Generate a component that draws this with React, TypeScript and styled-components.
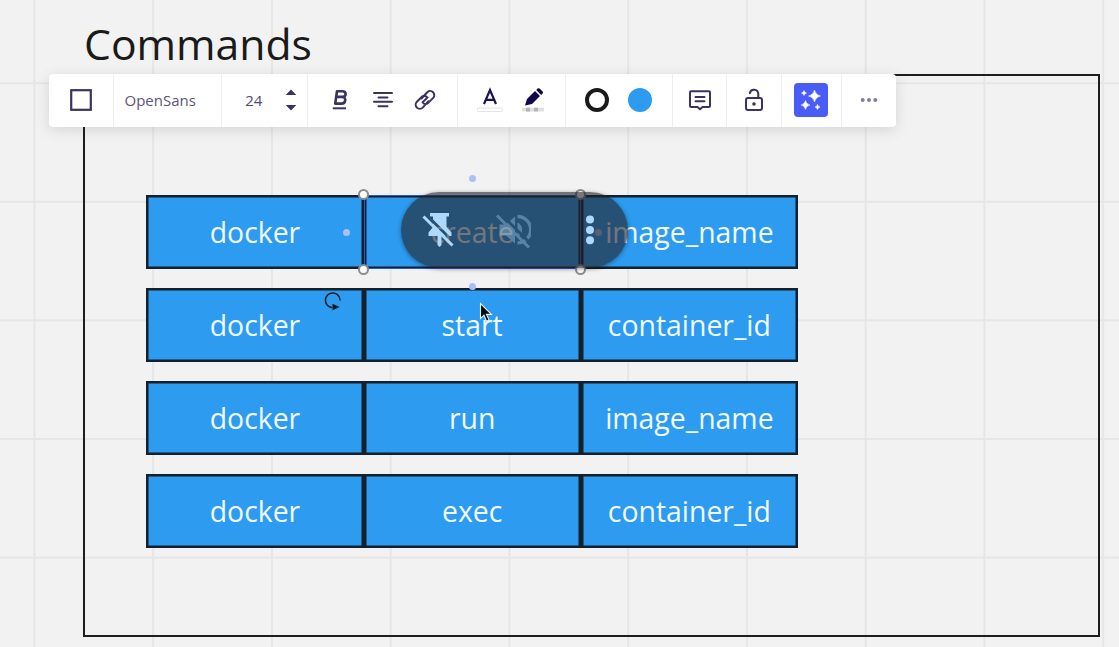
import React from "react";
import styled, { createGlobalStyle } from "styled-components";

const INK = "#3b3163";

const GlobalStyle = createGlobalStyle`
  *, *::before, *::after { box-sizing: border-box; }
  html, body { margin: 0; padding: 0; overflow: hidden; }
  body { font-family: "Open Sans", "Noto Sans", sans-serif; }
  svg { display: block; flex: none; overflow: visible; }
`;

const Board = styled.main`
  position: relative;
  width: 1119px;
  height: 647px;
  overflow: hidden;
  background-color: #f2f2f2;
  background-image:
    linear-gradient(to right, #e6e6e7 1.6px, transparent 1.6px),
    linear-gradient(to bottom, #e6e6e7 1.6px, transparent 1.6px);
  background-size: 118.75px 118.6px;
  background-position: 33.4px 82.2px;
`;

const Title = styled.h1`
  position: absolute;
  left: 84px;
  top: 14px;
  margin: 0;
  font-size: 42.7px;
  line-height: 60px;
  font-weight: 400;
  color: #1a1a1a;
  white-space: nowrap;
`;

const Frame = styled.section`
  position: absolute;
  left: 83.4px;
  top: 74px;
  z-index: 0;
  width: 1016.6px;
  height: 563px;
  padding: 118.6px 0 0 61px;
  border: 2px solid #1d1e1e;
`;

const Rows = styled.div`
  display: flex;
  flex-direction: column;
  gap: 19.2px;
`;

const Row = styled.div`
  display: grid;
  grid-template-columns: repeat(3, 217.2px);
  height: 74px;
`;

const Cell = styled.div<{ $selected?: boolean }>`
  position: relative;
  display: flex;
  align-items: center;
  justify-content: center;
  padding-top: 0.6px;
  background: #2d9bf0;
  border: 2px solid #14202b;
  box-shadow: inset 0 0 0 0.5px #14202b;
  color: #f1f9ff;
  font-size: 28.4px;
  line-height: 38px;
  outline: ${(p) => (p.$selected ? "1px solid #2f57d9" : "none")};
  outline-offset: -1px;
  z-index: ${(p) => (p.$selected ? 1 : 0)};
`;

const Handle = styled.i<{ $x: number; $y: number }>`
  position: absolute;
  left: ${(p) => p.$x - 5.5}px;
  top: ${(p) => p.$y - 5.5}px;
  width: 11px;
  height: 11px;
  border-radius: 50%;
  background: #fff;
  border: 2px solid #8c8c8c;
`;

const Anchor = styled.i<{ $x: number; $y: number }>`
  position: absolute;
  left: ${(p) => p.$x - 3.5}px;
  top: ${(p) => p.$y - 3.5}px;
  width: 7px;
  height: 7px;
  border-radius: 50%;
  background: #a9c1f3;
`;

const Toolbar = styled.nav`
  position: absolute;
  left: 49px;
  top: 73.5px;
  display: flex;
  width: 847px;
  height: 53px;
  background: #fff;
  border-radius: 4px;
  box-shadow: 0 3px 14px rgba(40, 40, 60, 0.14);
`;

const Group = styled.div<{ $width: number }>`
  display: flex;
  align-items: center;
  justify-content: center;
  width: ${(p) => p.$width}px;
  color: ${INK};
  & + & { border-left: 1.5px solid #eeeef1; }
`;

const Tool = styled.span`
  display: flex;
  align-items: center;
  justify-content: center;
  width: 42.7px;
  height: 32px;
`;

const FontName = styled.span`
  width: 85px;
  font-size: 15px;
  color: #5b547c;
`;

const FontSize = styled.span`
  width: 39.500px;
  margin-left: 13.500px;
  font-size: 15px;
  color: #4f4774;
`;

const Magic = styled.span`
  display: flex;
  align-items: center;
  justify-content: center;
  width: 34px;
  height: 34px;
  border-radius: 4px;
  background: #4a5cf6;
`;

const Pill = styled.aside`
  position: absolute;
  left: 400.5px;
  top: 192px;
  width: 227.5px;
  height: 75.5px;
  border-radius: 38px;
  background: rgba(34, 35, 40, 0.61);
  box-shadow: 0 1px 4px rgba(0, 0, 0, 0.4);
`;

const PillIcons = styled.div`
  display: flex;
  align-items: center;
  height: 100%;
  padding: 1px 0 0 20px;
`;

const Floating = styled.span<{ $x: number; $y: number }>`
  position: absolute;
  left: ${(p) => p.$x}px;
  top: ${(p) => p.$y}px;
`;

const commands = [
  ["docker", "create", "image_name"],
  ["docker", "start", "container_id"],
  ["docker", "run", "image_name"],
  ["docker", "exec", "container_id"],
];

const line = { fill: "none", stroke: INK, strokeWidth: 2, strokeLinecap: "round", strokeLinejoin: "round" } as const;

const SquareIcon = () => (
  <svg width="22" height="22" viewBox="0 0 22 22"><rect x="1.2" y="1.2" width="19.6" height="19.6" fill="none" stroke={INK} strokeWidth="2.200" /></svg>
);

const StepperIcon = () => (
  <svg width="12" height="22" viewBox="0 0 12 22" fill={INK}><path d="M6 .5 11.300 6H.7ZM6 21.500.7 16h10.600Z" /></svg>
);

const BoldIcon = () => (
  <svg width="16" height="22" viewBox="0 0 16 22" {...line}>
    <path strokeWidth="2.600" d="M5 2.200h5.300c4.500 0 4.300 5.700.2 5.700H4.200M10.300 7.900c4.300 0 3.700 6.700-.8 6.700H3.200L5 2.200" />
    <path strokeWidth="2" strokeLinecap="butt" d="M.8 19.300h13.200" />
  </svg>
);

const AlignIcon = () => (
  <svg width="20" height="18" viewBox="0 0 20 18" {...line}><path d="M1 2h18M5.500 6.500h9M1 10.800h18M5.500 15.200h9" /></svg>
);

const LinkIcon = () => (
  <svg width="22" height="22" viewBox="0 0 22 22" {...line}>
    <path d="M7.500 9.500 13.300 3.200a4.100 4.100 0 0 1 5.700 5.900l-5 5c-1.600 1.500-3.700 1.100-4.500.2M14.500 12.200l-5.800 6.400a4.100 4.100 0 0 1-5.800-5.800l5-5c1.600-1.400 3.600-1.100 4.500 0M8.600 13.200l5-4.800" />
  </svg>
);

const TextColorIcon = () => (
  <svg width="26" height="24" viewBox="0 0 26 24">
    <path d="M7 16 13 2l6 14M9 11.800h8" fill="none" stroke="#1c124f" strokeWidth="2.200" />
    <rect x=".5" y="20" width="25" height="3.500" rx="1" fill="#fff" stroke="#e3e3e6" />
  </svg>
);

const PenIcon = () => (
  <svg width="22" height="24" viewBox="0 0 22 24">
    <path d="M3 17.500 5 11l8-8 5 5-8 8ZM14.200 1.900 15.600.6q1-.9 2 0l3 3q1 1 0 2l-1.400 1.300Z" fill="#12074a" />
    <path d="M0 19.700h22v3.800H0Z" fill="#e0e0e0" /><path d="M4 19.700h4v3.800H4ZM12 19.700h4v3.800h-4Z" fill="#b4b4b7" />
  </svg>
);

const CommentIcon = () => (
  <svg width="24" height="22" viewBox="0 0 24 22" {...line}>
    <path d="M3 2.200h18q1 0 1 1V17q0 1-1 1h-6.500L12 20.300 9.500 18H3q-1 0-1-1V3.200q0-1 1-1ZM7.500 8h9M7.500 12.300h9" />
  </svg>
);

const UnlockIcon = () => (
  <svg width="20" height="24" viewBox="0 0 20 24" {...line}>
    <rect x="2" y="10" width="16" height="12" rx="2" /><path d="M5.800 5.200a4.300 4.300 0 0 1 8.500.6V10" />
    <circle cx="10" cy="16" r="1.800" fill={INK} stroke="none" />
  </svg>
);

const SparkIcon = () => (
  <svg width="22" height="22" viewBox="0 0 22 22" fill="#fff" stroke="#fff" strokeWidth=".5" strokeLinejoin="round">
    <path d="M14.500 1q1 5 6 6-5 1-6 6-1-5-6-6 5-1 6-6ZM5.500 11.500q.8 3.700 4.500 4.500-3.700.8-4.500 4.500Q4.700 16.800 1 16q3.700-.8 4.500-4.500ZM4 1.500q.5 2 2.500 2.500-2 .5-2.500 2.500Q3.500 4.500 1.500 4 3.500 3.500 4 1.500ZM17.500 15.500q.5 2 2.500 2.500-2 .5-2.500 2.500-.5-2-2.500-2.500 2-.5 2.500-2.500Z" />
  </svg>
);

const MoreIcon = () => (
  <svg width="18" height="6" viewBox="0 0 18 6" fill="#837d9c"><circle cx="2.700" cy="3" r="2" /><circle cx="9" cy="3" r="2" /><circle cx="15.300" cy="3" r="2" /></svg>
);

const PinOffIcon = () => (
  <svg width="36" height="38" viewBox="0 0 36 38">
    <mask id="pin-gap"><rect width="36" height="38" fill="#fff" /><path d="m4 2.500 31 31" stroke="#000" strokeWidth="3" /></mask>
    <path mask="url(#pin-gap)" d="M9 2h19v3.500h-2.500V16l5 5.500V25H20.500v9L18.500 36l-2-2v-9H7.500v-3.500L12 16V5.500H9Z" fill="#addafc" />
    <path d="m2.500 5.500 29 29" stroke="#addafc" strokeWidth="3" />
  </svg>
);

const SoundOffIcon = () => (
  <svg width="36" height="36" viewBox="0 0 36 36" opacity=".36">
    <mask id="sound-gap"><rect width="36" height="36" fill="#fff" /><path d="m4 0 32 32" stroke="#000" strokeWidth="3" /></mask>
    <g mask="url(#sound-gap)">
      <path d="M4.500 12.500h6.500L20 4.500v27l-9-8H4.500Z" fill="#addafc" />
      <path d="M22.500 4.500a13.200 13.200 0 0 1 0 26.400" fill="none" stroke="#addafc" strokeWidth="3.400" /><path d="M22.500 10.500a8 8 0 0 1 0 14.500Z" fill="#addafc" />
    </g>
    <path d="m2 3.500 32 32" stroke="#addafc" strokeWidth="3" />
  </svg>
);

const KebabIcon = () => (
  <svg width="8" height="30" viewBox="0 0 8 30" fill="#addafc"><circle cx="4" cy="4.500" r="4" /><circle cx="4" cy="15" r="4" /><circle cx="4" cy="25.300" r="4" /></svg>
);

const SoundSlot = styled.span` margin-left: 38px; `;
const KebabSlot = styled.span` margin-left: 55.5px; `;

export default function App() {
  return (
    <>
      <GlobalStyle />
      <Board>
        <Title>Commands</Title>
        <Frame>
          <Rows>
            {commands.map((row, r) => (
              <Row key={r}>
                {row.map((text, c) => (
                  <Cell key={c} $selected={r === 0 && c === 1}>{text}</Cell>
                ))}
              </Row>
            ))}
          </Rows>
        </Frame>

        <Handle $x={363.5} $y={194.5} />
        <Handle $x={580.5} $y={194.5} />
        <Handle $x={363.5} $y={269.5} />
        <Handle $x={580.5} $y={269.5} />
        <Anchor $x={472} $y={178} />
        <Anchor $x={472} $y={286.500} />
        <Anchor $x={346.500} $y={232} />
        <Anchor $x={598} $y={232} />

        <Floating $x={324} $y={292}>
          <svg width="18" height="20" viewBox="0 0 18 20">
            <path d="M16 8.500A7.300 7.300 0 1 0 8 15.500" fill="none" stroke="#14202b" strokeWidth="1.600" />
            <path d="M8.500 11.800 15.500 15l-7 3.200Z" fill="#101820" />
          </svg>
        </Floating>

        <Toolbar>
          <Group $width={63.5}><SquareIcon /></Group>
          <Group $width={108}><FontName>OpenSans</FontName></Group>
          <Group $width={86.5}><FontSize>24</FontSize><StepperIcon /></Group>
          <Group $width={150}><Tool><BoldIcon /></Tool><Tool><AlignIcon /></Tool><Tool><LinkIcon /></Tool></Group>
          <Group $width={107.5}><Tool><TextColorIcon /></Tool><Tool><PenIcon /></Tool></Group>
          <Group $width={107.5}>
            <Tool><svg width="24" height="24"><circle cx="12" cy="12" r="10" fill="none" stroke="#1a1a1a" strokeWidth="4" /></svg></Tool>
            <Tool><svg width="24" height="24"><circle cx="12" cy="12" r="12" fill="#2d9bf0" /></svg></Tool>
          </Group>
          <Group $width={54}><CommentIcon /></Group>
          <Group $width={54.5}><UnlockIcon /></Group>
          <Group $width={60.5}><Magic><SparkIcon /></Magic></Group>
          <Group $width={55}><MoreIcon /></Group>
        </Toolbar>

        <Pill>
          <PillIcons>
            <PinOffIcon />
            <SoundSlot><SoundOffIcon /></SoundSlot>
            <KebabSlot><KebabIcon /></KebabSlot>
          </PillIcons>
        </Pill>

        <Floating $x={478.500} $y={302}>
          <svg width="14" height="21" viewBox="0 0 14 21">
            <path d="M1.500 1.500v15l3.500-3.300 2.500 6 2.600-1.100-2.600-5.700h5Z" fill="#0b0b0b" stroke="#e8f2fb" strokeWidth="1.100" />
          </svg>
        </Floating>
      </Board>
    </>
  );
}
